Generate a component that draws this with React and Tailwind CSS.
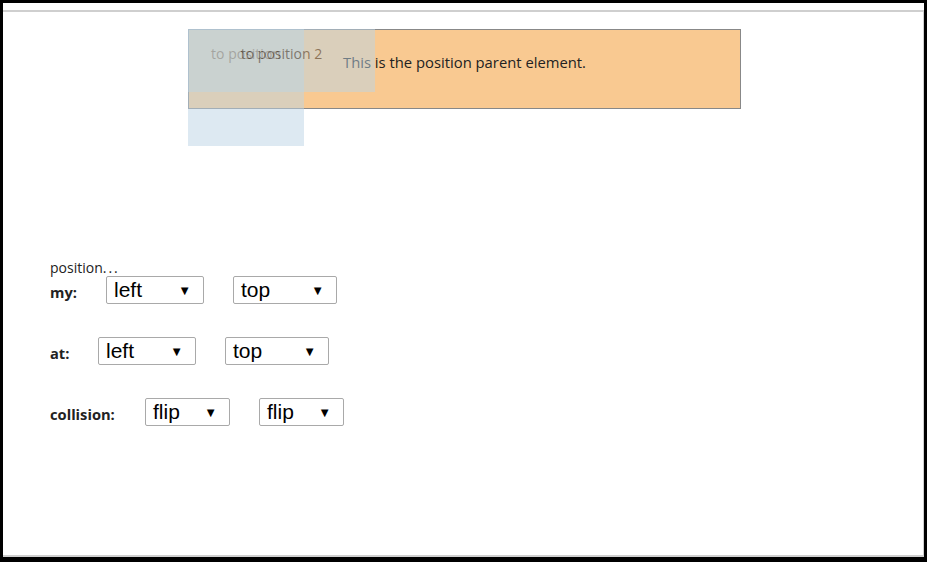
import React from 'react';

const humanist = { fontFamily: '"Open Sans", "DejaVu Sans", sans-serif' };
const arial = { fontFamily: '"Liberation Sans", Arial, sans-serif' };

const Select = ({ value, width }) => (
  <div
    className={`flex h-[28px] items-center justify-between rounded-[2px] border border-[#a9a9a9] bg-white pl-[7px] pr-[12px] text-[21px] leading-none text-black ${width}`}
    style={arial}
  >
    <span className="-mt-[1px]">{value}</span>
    <span className="text-[13px]">▼</span>
  </div>
);

const Row = ({ label, first, second, widths, labelWidth }) => (
  <div className="flex items-end">
    <b className={`pb-[4px] text-[14.7px] leading-[16px] text-[#222] ${labelWidth}`} style={humanist}>
      {label}
    </b>
    <div className="flex gap-[29px]">
      <Select value={first} width={widths[0]} />
      <Select value={second} width={widths[1]} />
    </div>
  </div>
);

const App = () => {
  return (
    <div className="flex h-[562px] w-[927px] bg-black pb-[5px] pl-[3px] pr-[3px] pt-[3px]">
      <div className="flex flex-1 flex-col bg-white">
        <div className="h-[7px]" />
        <div className="h-[2px] bg-[#cfcfcf]" />
        <div className="flex-1 border-r border-[#cfcfcf]">
          {/* position parent */}
          <div className="relative ml-[185px] mt-[17px] h-[80px] w-[553px] border border-[#888] bg-[#f9c991] pt-[24px] text-center">
            <p className="text-[14.8px] leading-[16px] text-[#222]" style={humanist}>
              This is the position parent element.
            </p>
            <div className="absolute left-[-1px] top-[-1px] h-[117px] w-[116px] bg-[#bcd5e6] pt-[12px] text-center opacity-50">
              <span className="text-[14px] leading-[16px] text-[#222]" style={humanist}>to position</span>
            </div>
            <div className="absolute left-[-1px] top-[-1px] h-[63px] w-[187px] bg-[#bcd5e6] pt-[12px] text-center opacity-50">
              <span className="text-[14px] leading-[16px] text-[#222]" style={humanist}>to position 2</span>
            </div>
          </div>

          {/* controls */}
          <div className="ml-[47px] mt-[151px]">
            <div className="text-[14px] leading-[15px] text-[#222]" style={humanist}>
              position<span className="tracking-[2px]">...</span>
            </div>
            <div className="flex flex-col gap-[33px] pt-[1px]">
              <Row label="my:" first="left" second="top" widths={['w-[98px]', 'w-[104px]']} labelWidth="w-[56px]" />
              <Row label="at:" first="left" second="top" widths={['w-[98px]', 'w-[104px]']} labelWidth="w-[48px]" />
              <Row label="collision:" first="flip" second="flip" widths={['w-[85px]', 'w-[85px]']} labelWidth="w-[95px]" />
            </div>
          </div>
        </div>
        <div className="h-[2px] bg-[#cfcfcf]" />
      </div>
    </div>
  );
};

export default App;
